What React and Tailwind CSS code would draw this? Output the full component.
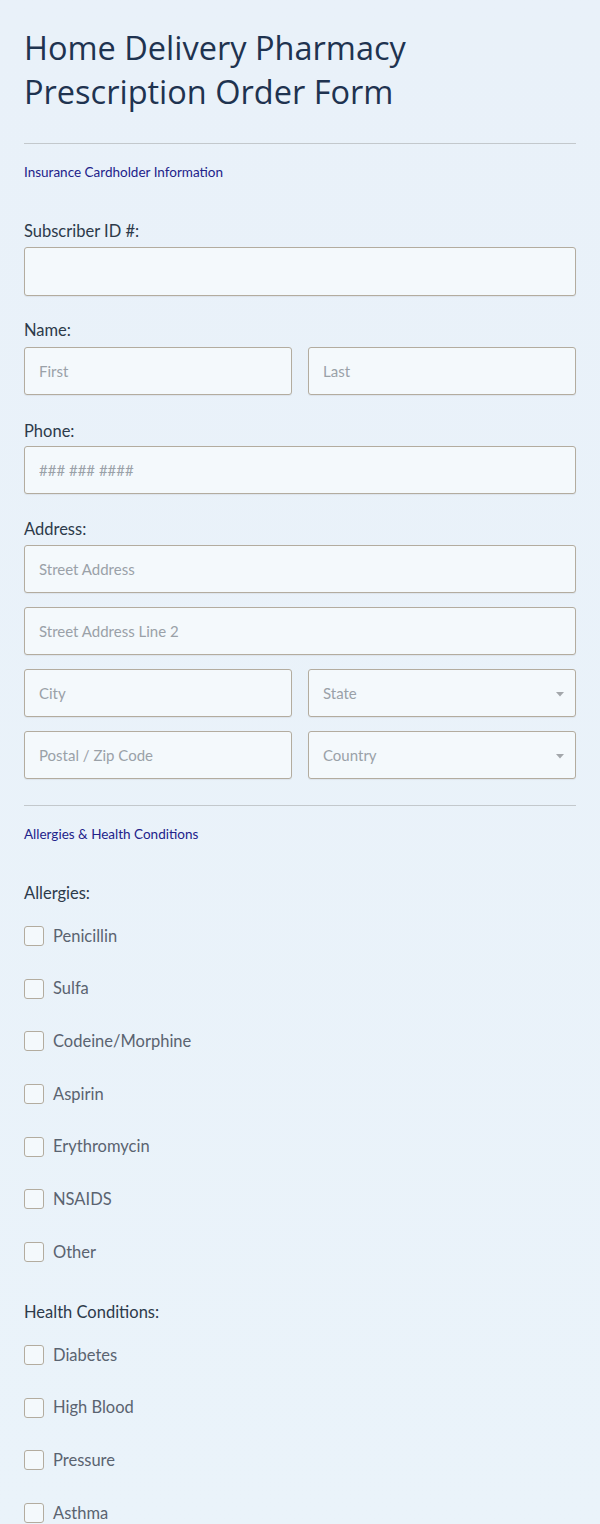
import React from 'react';

const font = { fontFamily: 'Lato, "Noto Sans", sans-serif' };

const TextInput = ({ placeholder, className = '' }) => (
  <input
    type="text"
    placeholder={placeholder}
    className={`h-[48px] w-full rounded-[3px] border border-[#b3ac9f] bg-[#f4f9fc] px-[14px] text-[15px] text-[#4a5260] placeholder:text-[#9aa1a8] outline-none shadow-[0_1px_1px_rgba(0,0,0,0.06)] ${className}`}
  />
);

const SelectInput = ({ placeholder }) => (
  <div className="relative h-[48px] w-full rounded-[3px] border border-[#b3ac9f] bg-[#f4f9fc] shadow-[0_1px_1px_rgba(0,0,0,0.06)]">
    <div className="flex h-full items-center px-[14px] text-[15px] text-[#9aa1a8]">{placeholder}</div>
    <svg className="absolute right-[11px] top-[22px]" width="8" height="5" viewBox="0 0 8 5">
      <path d="M0 0 L8 0 L4 4.5 Z" fill="#a3a7ab" />
    </svg>
  </div>
);

const Label = ({ children, className = '' }) => (
  <div className={`text-[16.5px] leading-[20px] text-[#2d3a4a] ${className}`}>{children}</div>
);

const SectionHeading = ({ children, className = '' }) => (
  <div className={`text-[13.5px] leading-[16px] text-[#22228a] ${className}`}>{children}</div>
);

const Checkbox = ({ label }) => (
  <label className="flex h-[24px] items-center">
    <span className="h-[20px] w-[20px] rounded-[3px] border border-[#b3ac9f] bg-[#f4f9fc]" />
    <span className="ml-[9px] text-[16.5px] text-[#5a6370]">{label}</span>
  </label>
);

const allergies = ['Penicillin', 'Sulfa', 'Codeine/Morphine', 'Aspirin', 'Erythromycin', 'NSAIDS', 'Other'];
const conditions = ['Diabetes', 'High Blood', 'Pressure', 'Asthma'];

export default function App() {
  return (
    <div className="h-[1524px] w-[600px] overflow-hidden bg-gradient-to-b from-[#e9f1f9] to-[#eaf3fa]" style={font}>
      <div className="px-[24px] pt-[26px]">
        <h1
          className="text-[32.5px] font-normal leading-[44px] text-[#1f3350]"
          style={{ fontFamily: '"Open Sans", sans-serif' }}
        >
          Home Delivery Pharmacy
          <br />
          Prescription Order Form
        </h1>

        <div className="mt-[29px] h-px bg-[#c3c8cc]" />
        <SectionHeading className="mt-[20px]">Insurance Cardholder Information</SectionHeading>

        <Label className="mt-[41px]">Subscriber ID #:</Label>
        <TextInput className="mt-[6px] h-[49px]" />

        <Label className="mt-[24px]">Name:</Label>
        <div className="mt-[7px] grid grid-cols-2 gap-[16px]">
          <TextInput placeholder="First" className="h-[47px]" />
          <TextInput placeholder="Last" className="h-[47px]" />
        </div>

        <Label className="mt-[26px]">Phone:</Label>
        <TextInput placeholder="### ### ####" className="mt-[5px]" />

        <Label className="mt-[25px]">Address:</Label>
        <div className="mt-[6px] flex flex-col gap-[14px]">
          <TextInput placeholder="Street Address" />
          <TextInput placeholder="Street Address Line 2" />
          <div className="grid grid-cols-2 gap-[16px]">
            <TextInput placeholder="City" />
            <SelectInput placeholder="State" />
          </div>
          <div className="grid grid-cols-2 gap-[16px]">
            <TextInput placeholder="Postal / Zip Code" />
            <SelectInput placeholder="Country" />
          </div>
        </div>

        <div className="mt-[26px] h-px bg-[#c3c8cc]" />
        <SectionHeading className="mt-[20px]">Allergies &amp; Health Conditions</SectionHeading>

        <Label className="mt-[41px]">Allergies:</Label>
        <div className="mt-[21px] flex flex-col gap-[28.67px]">
          {allergies.map((a) => (
            <Checkbox key={a} label={a} />
          ))}
        </div>

        <Label className="mt-[38px]">Health Conditions:</Label>
        <div className="mt-[21px] flex flex-col gap-[28.67px]">
          {conditions.map((c) => (
            <Checkbox key={c} label={c} />
          ))}
        </div>
      </div>
    </div>
  );
}
